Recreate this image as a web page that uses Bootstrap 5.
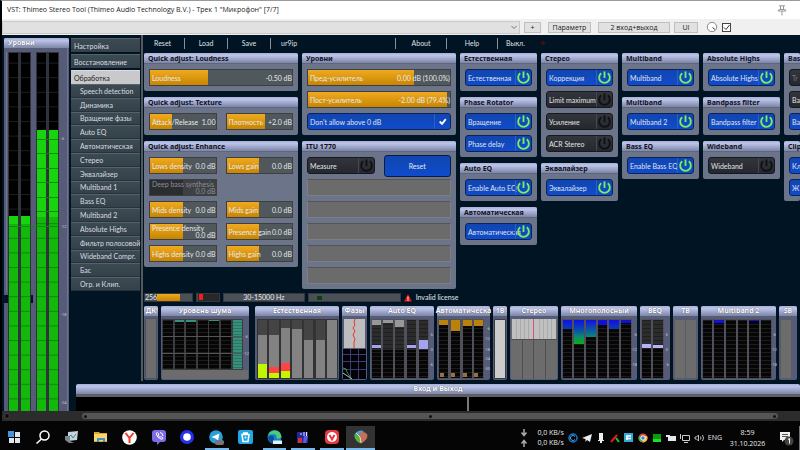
<!DOCTYPE html>
<html lang="ru">
<head>
<meta charset="utf-8">
<meta name="viewport" content="width=device-width, initial-scale=1">
<title>VST: Thimeo Stereo Tool</title>
<link href="https://cdn.jsdelivr.net/npm/bootstrap@5.3.0/dist/css/bootstrap.min.css" rel="stylesheet">
<style>
:root{--ui:Lato,Roboto,sans-serif;--sys:"Open Sans","Noto Sans",sans-serif;--hd:linear-gradient(#a9b1d2,#bcc3ea 25%,#8d95b8 80%,#7d86a5)}
body{background:#001424;color:#e6e9ee;font-family:var(--ui);font-size:7px;line-height:10px;min-height:100vh;overflow:hidden}
button,input,select{font:inherit;color:inherit;padding:0;margin:0;border:0;border-radius:0}
.titlebar{background:#fff;border-top:1px solid #9a9a9a;border-left:2px solid #000;color:#222;font-family:var(--sys);font-size:7px;height:19px;padding:0 13px 0 5px}
.hostbar{background:#f0f0f0;height:16px;font-family:var(--sys);font-size:7px;color:#222;border-left:2px solid #000;padding:0 69px 0 0;gap:4px}
.hostbar button{background:#e1e1e1;border:1px solid #bfbfbf;height:11px;line-height:9px;flex:none}
.preset{appearance:none;height:13px;border:1px solid #c8c8c8;background:#e1e1e1 url("data:image/svg+xml,%3Csvg xmlns='http://www.w3.org/2000/svg' width='6' height='5'%3E%3Cpath d='M.5 1 3 3.500 5.500 1' fill='none' stroke='%23777'/%3E%3C/svg%3E") no-repeat right 2px center}
.w-plus{width:17px}.w-par{width:43px}.w-io{width:72px;margin:0 0 0 3px}.w-ui{width:24px}
.agree{appearance:none;width:9px;height:9px;border:1px solid #444;background:#fff url("data:image/svg+xml,%3Csvg xmlns='http://www.w3.org/2000/svg' width='7' height='7'%3E%3Cpath d='M1 3.500 3 5.500 6.500 1' fill='none' stroke='%23333'/%3E%3C/svg%3E") no-repeat center}
.hostbar .w-par{margin-left:3px}
.plugin{border-left:2px solid #000}
.levels{width:65px;margin:3px 0 0 2px;background:#565c77}
.rest{min-width:0}
.hd{background:var(--hd);height:10px;line-height:10px;font-family:"Noto Sans",sans-serif;font-weight:700;color:#fff;text-shadow:0 0 1px #334;border-radius:2px 2px 0 0;white-space:nowrap;font-size:7px}
.hd-d{color:#10131c;text-shadow:none;padding-left:4px;height:11px;line-height:11px;border-bottom:1px solid #5d6580}
.side{width:69px;margin:3px 1px 0 2px;gap:2px}
.side a,.sub a{display:flex;align-items:center;background:linear-gradient(#3c4a52,#34414a);color:#d8dde2;text-decoration:none;border-top:1px solid #55626a;white-space:nowrap}
.side>a{height:14px;padding-left:3px}
.side>a.cur{background:#c9c9cb;color:#222;border-color:#ddd}
.sub{min-height:207px;margin-top:-2px}
.sub a{flex:1;padding-left:9px;border-bottom:1px solid #27333c}
.main{border-left:2px solid #55585c;padding-left:1px;min-width:0;margin-bottom:3px}
.menu{height:18px;padding-bottom:2px;display:grid;grid-template-columns:41fr 43fr 43fr 125fr 51fr 51fr 43fr 259fr;align-items:center}
.menu a{color:#dfe3e8;text-decoration:none;text-align:center;border-right:1px solid #8a9098;line-height:11px}
.menu a.first{text-align:left;padding-left:10px}.menu a.last{border:0;text-align:left;padding-left:8px}
.led{width:4px;height:4px;border-radius:50%;background:#4a0c10}
.cols{display:grid;gap:4px;grid-template-columns:repeat(2,minmax(0,154fr)) repeat(4,minmax(0,77fr)) minmax(0,16fr)}
.cols>div{display:flex;flex-direction:column;gap:6px;overflow:hidden}
.box{background:#6c748a;border-radius:2px}
.bd{padding:5px;display:grid;gap:5px 9px}
.two{grid-template-columns:1fr 1fr}
.full{grid-column:1/-1}
.sl{display:grid;height:17px}
.sl>*{grid-area:1/1;min-width:0}
.sl input{appearance:none;width:100%;height:17px;border:1px solid #3c4044;background:linear-gradient(90deg,transparent var(--v),#50585c var(--v)),linear-gradient(#efaa20,#c98500)}
.sl input::-webkit-slider-thumb{appearance:none;width:1px;height:1px}
.sl label{pointer-events:none;position:relative;padding:0 1px 0 3px;display:flex;justify-content:space-between;align-items:center;white-space:nowrap}
.sl .wrap2{flex-direction:column;align-items:stretch;justify-content:center;line-height:7px}
.wrap2 span:last-child{text-align:right}
.sl.dim{color:#8c9094}.sl.dim input{background:linear-gradient(90deg,#2b2d30 50%,#3d4144 50%)}
.tg{display:flex;align-items:center;height:17px;border:1px solid #15181e;border-radius:3px;background:linear-gradient(#32353c,#25282e);text-align:left;color:#e2e4e8;width:100%;min-width:0}
.tg span{flex:1;min-width:0;padding-left:2px;white-space:nowrap}
.tg svg{flex:none;width:16px;height:15px;border-left:1px solid #454850;color:#101113}
.tg.on{background:linear-gradient(#1145b0,#0f4ccc);border-color:#0b2358}
.tg.on svg{color:#79ee5e;border-color:#2f5fc0}
.reset{height:22px;margin:-2px 0 -3px;background:linear-gradient(#1145b0,#0f4ccc);border:1px solid #0a1c44;border-radius:3px}
.slot{height:17px;background:#6b6b6b;border:1px solid #7b7f88;border-top-color:#555}
.wide77{min-width:67px}
.status{display:grid;grid-template-columns:49fr 24fr 82fr 93fr 397fr;gap:3px;height:9px;margin:4px 0 4px;line-height:9px}
.status>div{white-space:nowrap}
.cell{background:#4a5056;border:1px solid #33383e;line-height:7px}
.orange{width:23px;background:linear-gradient(#efaa20,#c98500)}
.strip{display:grid;gap:3px;padding-right:3px;grid-template-columns:14fr 88fr 87fr 25fr 64fr 53fr 14fr 48fr 76fr 30fr 25fr 75fr 18fr}
.strip>div{background:#565c77;border-radius:2px;min-width:0}
.strip>.nat{margin-left:3px}
.strip svg{display:block;width:100%;height:64px;overflow:visible}
.strip .hd{display:flex;justify-content:center}
svg text{font-size:4px;fill:#c4c8d4;font-family:Roboto,sans-serif}
.strip svg text{text-anchor:end}
.io{margin-left:7px}
.scope{border-top:3px solid #5c5f64;height:17px;background:#000}
.scope i{width:2px;background:#777;margin-left:54%}
.hscroll{background:#2c2c2c;height:10px;border-left:2px solid #000;padding-left:2px}
.hscroll .thumb{background:#555;height:6px;border-radius:3px;margin:0 22px 0 72px;flex:1;padding:0 2px}
.knobdot{width:6px;height:6px;border-radius:50%;background:#0c0c0c;border:1px solid #444}
.dotk{width:3px;height:3px;border-radius:50%;background:#111}
.taskbar{background:#050505;padding-top:5px;height:29px;font-family:var(--sys);font-size:7px;color:#e8e8e8}
.apps{width:375px}
.apps button{flex:1;background:none;border-bottom:2px solid transparent;display:flex;align-items:center;justify-content:center}
.apps .run{position:relative}
.apps .run::after{content:"";position:absolute;left:3px;right:2px;bottom:-2px;height:2px;background:#76b9ed}
.apps .act{background:#333}.apps .act::after{left:0;right:0}
.tray{gap:4px}
.tray svg{width:10px;height:10px}
.tray svg.arrows{width:8px;height:20px;margin-right:5px}
.tray svg.note{width:16px;height:15px;margin-left:6px}
.clock{width:43px;text-align:center;line-height:11px}
</style>
<script src="https://cdn.jsdelivr.net/npm/bootstrap@5.3.0/dist/js/bootstrap.bundle.min.js"></script>
</head>
<body class="d-flex flex-column">
<svg width="0" height="0" class="position-absolute" aria-hidden="true">
<defs>
<symbol id="pw" viewBox="0 0 16 15"><path d="M4.500 3A5.700 5.700 0 1 0 11.500 3" fill="none" stroke="currentColor" stroke-width="2"/><path d="M8 1v7" stroke="currentColor" stroke-width="2"/></symbol>
<pattern id="seg" width="10" height="4" patternUnits="userSpaceOnUse"><rect width="10" height="4" fill="#060606"/><rect width="10" height="1" fill="#1c1c1c"/></pattern>
<pattern id="segd" width="10" height="4" patternUnits="userSpaceOnUse"><rect width="10" height="4" fill="#2c2c2c"/><rect width="10" height="1" fill="#1f1f1f"/></pattern>
<pattern id="lvb" width="70" height="14.600" patternUnits="userSpaceOnUse"><rect width="70" height="14.600" fill="#000"/><rect width="70" height="1" fill="#1d1d1d"/></pattern>
<pattern id="lvg" width="70" height="14.600" patternUnits="userSpaceOnUse"><rect width="70" height="14.600" fill="#12b80a"/><rect width="70" height="1" fill="#0c8a0a"/></pattern>
<pattern id="teal" width="10" height="3" patternUnits="userSpaceOnUse"><rect width="10" height="3" fill="#35917c"/><rect width="10" height="1" fill="#2b7463"/></pattern>
<linearGradient id="bg1" x2="0" y2="1"><stop stop-color="#1010e0"/><stop offset=".4" stop-color="#0a4cb0"/><stop offset=".7" stop-color="#0a8a70"/><stop offset="1" stop-color="#0cb010"/></linearGradient>
<linearGradient id="bg2" x2="0" y2="1"><stop stop-color="#1010e0"/><stop offset="1" stop-color="#0a8a78"/></linearGradient>
<linearGradient id="bg3" x2="0" y2="1"><stop stop-color="#1010e8"/><stop offset="1" stop-color="#0c3cb0"/></linearGradient>
</defs></svg>

<header class="titlebar d-flex align-items-center justify-content-between">
<span>VST: Thimeo Stereo Tool (Thimeo Audio Technology B.V.) - Трек 1 "Микрофон" [7/7]</span>
<svg width="10" height="11" viewBox="0 0 10 11" fill="none" stroke="#999"><path d="M2 .8h6M3.500 1v4M6.500 1v4M1 6q0-1.500 2-1.500h4q2 0 2 1.500zM5 6v4.500"/></svg>
</header>
<div class="hostbar d-flex align-items-center">
<select class="preset flex-fill" aria-label="Preset"><option></option></select>
<button class="w-plus">+</button><button class="w-par">Параметр</button><button class="w-io">2 вход+выход</button><button class="w-ui">UI</button>
<svg class="ms-1" width="12" height="12" viewBox="0 0 12 12" fill="#fff" stroke="#888"><circle cx="6" cy="6" r="4.700"/><path d="M6.500 6.500 9 8.500" stroke="#333"/></svg>
<input class="agree" type="checkbox" checked aria-label="Enabled">
</div>

<div class="plugin d-flex flex-fill">
<section class="levels flex-shrink-0">
<div class="hd ps-1">Уровни</div>
<svg class="d-block w-100" height="363" viewBox="0 0 65 363">
<path fill="#001424" d="M0 247h4v8H0zM27 247h2v8h-2z"/><path d="M2.500 4v240M63.500 0v363" stroke="#6d748e"/>
<path fill="#30333c" d="M4 4h23v359H4zM32 4h23v359H32z"/>
<path fill="url(#lvb)" d="M5 5h9v358H5zM17 5h9v358h-9zM33 5h9v358h-9zM45 5h9v358h-9z"/>
<path fill="url(#lvg)" d="M5 168h9v195H5zM17 168h9v195h-9zM33 82h9v281h-9zM45 82h9v281h-9z"/>
<path fill="#17d40c" d="M33 82h9v87h-9zM45 82h9v87h-9zM5 168h9v8H5zM17 168h9v8h-9z"/>
<path d="M33 91.500h21M33 105.500h21M33 120.500h21M33 134.500h21M33 149.500h21M33 163.500h21M5 178.500h49" stroke="#0c8a0a"/>
<text x="57" y="92">-6</text><text x="57" y="180">-12</text><text x="57" y="268">-18</text><text x="57" y="356">-24</text>
</svg>
</section>
<div class="rest d-flex flex-column flex-fill">
<div class="d-flex flex-fill">
<nav class="side d-flex flex-column flex-shrink-0">
<a href="#">Настройка</a><a href="#">Восстановление</a><a href="#" class="cur">Обработка</a>
<div class="sub d-flex flex-column"><a href="#">Speech detection</a><a href="#">Динамика</a><a href="#">Вращение фазы</a><a href="#">Auto EQ</a><a href="#">Автоматическая</a><a href="#">Стерео</a><a href="#">Эквалайзер</a><a href="#">Multiband 1</a><a href="#">Bass EQ</a><a href="#">Multiband 2</a><a href="#">Absolute Highs</a><a href="#">Фильтр полосовой</a><a href="#">Wideband Compr.</a><a href="#">Бас</a><a href="#">Огр. и Клип.</a></div>
</nav>
<main class="main flex-fill">
<nav class="menu"><a href="#" class="first">Reset</a><a href="#">Load</a><a href="#">Save</a><a href="#" class="first">ur9ip</a><a href="#">About</a><a href="#">Help</a><a href="#" class="last">Выкл.</a><span class="led"></span></nav>
<div class="cols">
<div>
 <section class="box"><div class="hd hd-d">Quick adjust: Loudness</div><div class="bd">
  <div class="sl"><input id="s1" type="range" style="--v:41%"><label for="s1"><span>Loudness</span><span>-0.50 dB</span></label></div></div></section>
 <section class="box"><div class="hd hd-d">Quick adjust: Texture</div><div class="bd two">
  <div class="sl"><input id="s2" type="range" style="--v:33%"><label for="s2"><span>Attack/Release</span><span>1.00</span></label></div>
  <div class="sl"><input id="s3" type="range" style="--v:58%"><label for="s3"><span>Плотность</span><span>+2.0 dB</span></label></div></div></section>
 <section class="box"><div class="hd hd-d">Quick adjust: Enhance</div><div class="bd two">
  <div class="sl"><input id="s4" type="range" style="--v:50%"><label for="s4"><span>Lows density</span><span>0.0 dB</span></label></div>
  <div class="sl"><input id="s5" type="range" style="--v:50%"><label for="s5"><span>Lows gain</span><span>0.0 dB</span></label></div>
  <div class="sl dim"><input id="s6" type="range" disabled><label for="s6" class="wrap2"><span>Deep bass synthesis</span><span>0.0 dB</span></label></div><div></div>
  <div class="sl"><input id="s7" type="range" style="--v:50%"><label for="s7"><span>Mids density</span><span>0.0 dB</span></label></div>
  <div class="sl"><input id="s8" type="range" style="--v:50%"><label for="s8"><span>Mids gain</span><span>0.0 dB</span></label></div>
  <div class="sl"><input id="s9" type="range" style="--v:50%"><label for="s9" class="wrap2"><span>Presence density</span><span>0.0 dB</span></label></div>
  <div class="sl"><input id="s10" type="range" style="--v:50%"><label for="s10"><span>Presence gain</span><span>0.0 dB</span></label></div>
  <div class="sl"><input id="s11" type="range" style="--v:50%"><label for="s11"><span>Highs density</span><span>0.0 dB</span></label></div>
  <div class="sl"><input id="s12" type="range" style="--v:50%"><label for="s12"><span>Highs gain</span><span>0.0 dB</span></label></div></div></section>
</div>
<div>
 <section class="box"><div class="hd hd-d">Уровни</div><div class="bd">
  <div class="sl"><input id="s13" type="range" style="--v:75%"><label for="s13"><span>Пред-усилитель</span><span>0.00 dB (100.0%)</span></label></div>
  <div class="sl"><input id="s14" type="range" style="--v:98%"><label for="s14"><span>Пост-усилитель</span><span>-2.00 dB (79.4%)</span></label></div>
  <button class="tg on"><span>Don't allow above 0 dB</span><svg viewBox="0 0 16 15"><path d="M5 7.500 7.500 10 11.500 5" fill="none" stroke="#fff" stroke-width="2"/></svg></button></div></section>
 <section class="box"><div class="hd hd-d">ITU 1770</div><div class="bd two">
  <button class="tg"><span>Measure</span><svg><use href="#pw"/></svg></button><button class="reset">Reset</button>
  <div class="slot full"></div><div class="slot full"></div><div class="slot full"></div><div class="slot full"></div><div class="slot full"></div></div></section>
</div>
<div>
 <section class="box"><div class="hd hd-d">Естественная</div><div class="bd"><button class="tg on"><span>Естественная</span><svg><use href="#pw"/></svg></button></div></section>
 <section class="box"><div class="hd hd-d">Phase Rotator</div><div class="bd"><button class="tg on"><span>Вращение</span><svg><use href="#pw"/></svg></button><button class="tg on"><span>Phase delay</span><svg><use href="#pw"/></svg></button></div></section>
 <section class="box"><div class="hd hd-d">Auto EQ</div><div class="bd"><button class="tg on"><span>Enable Auto EQ</span><svg><use href="#pw"/></svg></button></div></section>
 <section class="box"><div class="hd hd-d">Автоматическая</div><div class="bd"><button class="tg on"><span>Автоматическая</span><svg><use href="#pw"/></svg></button></div></section>
</div>
<div>
 <section class="box"><div class="hd hd-d">Стерео</div><div class="bd"><button class="tg on"><span>Коррекция</span><svg><use href="#pw"/></svg></button><button class="tg"><span>Limit maximum</span><svg><use href="#pw"/></svg></button><button class="tg"><span>Усиление</span><svg><use href="#pw"/></svg></button><button class="tg"><span>ACR Stereo</span><svg><use href="#pw"/></svg></button></div></section>
 <section class="box"><div class="hd hd-d">Эквалайзер</div><div class="bd"><button class="tg on"><span>Эквалайзер</span><svg><use href="#pw"/></svg></button></div></section>
</div>
<div>
 <section class="box"><div class="hd hd-d">Multiband</div><div class="bd"><button class="tg on"><span>Multiband</span><svg><use href="#pw"/></svg></button></div></section>
 <section class="box"><div class="hd hd-d">Multiband</div><div class="bd"><button class="tg on"><span>Multiband 2</span><svg><use href="#pw"/></svg></button></div></section>
 <section class="box"><div class="hd hd-d">Bass EQ</div><div class="bd"><button class="tg on"><span>Enable Bass EQ</span><svg><use href="#pw"/></svg></button></div></section>
</div>
<div>
 <section class="box"><div class="hd hd-d">Absolute Highs</div><div class="bd"><button class="tg on"><span>Absolute Highs</span><svg><use href="#pw"/></svg></button></div></section>
 <section class="box"><div class="hd hd-d">Bandpass filter</div><div class="bd"><button class="tg on"><span>Bandpass filter</span><svg><use href="#pw"/></svg></button></div></section>
 <section class="box"><div class="hd hd-d">Wideband</div><div class="bd"><button class="tg"><span>Wideband</span><svg><use href="#pw"/></svg></button></div></section>
</div>
<div>
 <section class="box"><div class="hd hd-d">Bas</div><div class="bd"><button class="tg wide77"><span class="text-secondary">Tr</span></button><button class="tg wide77"><span>Ba</span></button><button class="tg on wide77"><span>Ba</span></button></div></section>
 <section class="box"><div class="hd hd-d">Clip</div><div class="bd"><button class="tg on wide77"><span>Кл</span></button><button class="tg on wide77"><span>Ж</span></button></div></section>
</div>
</div>
<div class="status">
<div class="cell d-flex"><span>256</span><div class="orange"></div></div>
<div class="cell d-flex"><svg width="22" height="7"><path d="M1 0h21v7H1z" fill="#282828"/><path d="M2 0h4v6H2z" fill="#f02020"/></svg></div>
<div class="cell text-center">30-15000 Hz</div>
<div class="cell"><svg class="d-block" width="22" height="7"><path d="M8 2h5v4H8z" fill="#0c4010"/></svg></div>
<div class="d-flex align-items-center"><svg width="8" height="8" viewBox="0 0 8 8"><path d="M4 0 8 7.500H0z" fill="#e01818"/><path d="M4 2.500v3M4 6v1" stroke="#fff"/></svg><span class="ps-1">Invalid license</span></div>
</div>
<div class="strip">
<div><div class="hd">ДК</div><svg viewBox="0 0 14 64"><path fill="#6c6c6c" stroke="#4c5060" d="M1.500 2.500h11v60h-11z"/></svg></div>
<div><div class="hd">Уровень шума</div><svg viewBox="0 0 88 64"><path fill="#3c3c3c" d="M1 3h81v51H1z"/><path fill="url(#seg)" d="M2 4h10v49H2zM14 4h9v49h-9zM25 4h10v49H25zM37 4h10v49H37zM48 4h10v49H48zM60 4h10v49H60z"/><path fill="#35917c" d="M14 4h9v2h-9zM25 4h10v2H25zM48 4h10v1H48z"/><path fill="url(#teal)" d="M72 4h9v49h-9z"/><path stroke="#555" d="M1 20.500h81M1 37.500h81"/><path fill="#6c6c6c" d="M1 54h86v9H1z"/><text x="87" y="22">-6</text><text x="88" y="39">-12</text></svg></div>
<div class="nat"><div class="hd">Естественная</div><svg viewBox="0 0 84 64"><path fill="#333" d="M2 3h81v60H2z"/><path fill="#444" d="M3 4h9v58H3zM14 4h10v58H14zM26 4h9v58h-9z"/><path fill="#444" d="M37 4h10v58H37zM49 4h9v58h-9zM61 4h9v58h-9z"/><path fill="#828282" d="M3 19h9v43H3zM14 19h10v43H14zM26 12h9v50h-9zM37 13h10v49H37zM49 24h9v38h-9zM61 24h9v38h-9zM72 4h10v58H72z"/><path fill="#ff4343" d="M14 51h10v6H14zM26 47h9v8h-9z"/><path fill="#c2f500" d="M3 48h9v14H3zM14 57h10v5H14zM26 55h9v7h-9z"/></svg></div>
<div><div class="hd">Фазы</div><svg viewBox="0 0 25 64"><path fill="#bdbdbd" d="M2 3h21v29H2z"/><path fill="none" stroke="#f03030" d="m13 3-1 3 1 3-2 3 2 3-2 4 2 4-1 3v6"/><path fill="#020208" d="M1 33h23v30H1z"/><path stroke="#3c3c70" d="M1 38.500h23M1 45.500h23M1 53.500h23M8.500 33v30M16.500 33v30" fill="none"/><path fill="none" stroke="#3f8f4a" d="M1 52q4 0 4 4l4 6"/><path fill="none" stroke="#bbb" d="m1 57 9 6"/></svg></div>
<div><div class="hd">Auto EQ</div><svg viewBox="0 0 64 64"><path fill="#50505a" d="M1 3h58v60H1z"/><path fill="url(#seg)" d="M2 4h9v58H2zM13 4h10v58H13zM25 4h9v58h-9zM37 4h9v58h-9zM49 4h9v58h-9z"/><path fill="url(#segd)" d="M2 4h9v30H2zM13 4h10v30H13zM25 4h9v30h-9zM37 4h9v30h-9zM49 4h9v30h-9z"/><path fill="#989898" d="M2 4h9v5H2zM13 4h10v3H13zM25 4h9v7h-9z"/><path fill="#a3a3f0" d="M2 29h9v3H2zM37 29h9v3h-9zM49 24h9v9h-9z"/><text x="63" y="20">6</text><text x="63" y="35">0</text><text x="63" y="50">-6</text></svg></div>
<div><div class="hd">Автоматическа</div><svg viewBox="0 0 53 64"><path fill="#50505a" d="M1 3h46v60H1z"/><path fill="url(#seg)" d="M2 4h9v58H2zM14 4h9v58h-9zM26 4h9v58h-9zM37 4h9v58h-9z"/><path fill="#b8820c" d="M2 4h9v5H2zM14 4h9v11h-9zM26 4h9v6h-9zM37 4h9v6h-9z"/><path fill="#997044" d="M3 57h4v4H3zM14 57h4v4h-4zM26 57h4v4h-4zM37 57h4v4h-4z"/><text x="53" y="14">-6</text><text x="53" y="24">-12</text><text x="53" y="35">-18</text><text x="53" y="44">-24</text><text x="53" y="54">-30</text></svg></div>
<div><div class="hd">1B</div><svg viewBox="0 0 14 64"><path fill="#cbcbcb" stroke="#3c3c40" d="M1.500 3.500h11v59h-11z"/></svg></div>
<div><div class="hd">Стерео</div><svg viewBox="0 0 48 64"><path fill="#6c6c6c" d="M1 3h46v60H1z"/><path fill="#c0c0c0" d="M2 3h44v20H2z"/><path stroke="#aaa" d="M6.500 3v20M10.500 3v20M14.500 3v20M18.500 3v20M29.500 3v20M33.500 3v20M37.500 3v20M41.500 3v20"/><path stroke="#505050" d="M12.500 24v39M23.500 24v39M35.500 24v39M1 23.500h46"/><path stroke="#d85080" d="M23.500 3v20"/></svg></div>
<div><div class="hd">Многополосный</div><svg viewBox="0 0 76 64"><path fill="#50505a" d="M1 3h70v60H1z"/><path fill="url(#seg)" d="M2 4h9v58H2zM13 4h10v58H13zM25 4h10v58H25zM37 4h9v58h-9zM48 4h10v58H48zM60 4h10v58H60z"/><path fill="url(#bg3)" d="M2 4h9v9H2z"/><path fill="url(#bg1)" d="M13 4h10v24H13z"/><path fill="url(#bg2)" d="M25 4h10v17H25z"/><path fill="#1010d8" d="M37 4h9v5h-9zM60 4h10v3H60z"/><path fill="url(#bg3)" d="M48 4h10v9H48z"/><text x="76" y="20">-6</text><text x="76" y="35">-12</text><text x="76" y="50">-18</text></svg></div>
<div><div class="hd">BEQ</div><svg viewBox="0 0 30 64"><path fill="#50505a" d="M1 3h23v60H1z"/><path fill="url(#seg)" d="M2 4h9v58H2zM13 4h10v58H13z"/><path fill="url(#segd)" d="M2 4h9v29H2zM13 4h10v29H13z"/><path fill="#b4b4f4" d="M2 28h9v4H2zM13 29h10v3H13z"/><text x="28" y="20">6</text><text x="28" y="35">0</text><text x="29" y="50">-6</text></svg></div>
<div><div class="hd">TB</div><svg viewBox="0 0 25 64"><path fill="#6c6c6c" stroke="#5a5c64" d="M1.500 3.500h11v59h-11zM12.500 3.500h11v59h-11z"/></svg></div>
<div><div class="hd">Multiband 2</div><svg viewBox="0 0 75 64"><path fill="#50505a" d="M1 3h70v60H1z"/><path fill="url(#seg)" d="M2 4h9v58H2zM13 4h10v58H13zM25 4h10v58H25zM37 4h9v58h-9zM48 4h10v58H48zM60 4h10v58H60z"/><path fill="#1010d8" d="M13 4h10v3H13zM48 4h10v1H48z"/><text x="75" y="20">-6</text><text x="76" y="35">-12</text><text x="76" y="50">-18</text></svg></div>
<div><div class="hd">SB</div><svg viewBox="0 0 18 64"><path fill="#6c6c6c" stroke="#5a5c64" d="M1.500 3.500h11v59h-11z"/></svg></div>
</div>
</main>
</div>
<section class="io"><div class="hd text-center">Вход и Выход</div><div class="scope d-flex"><i></i></div></section>
</div>
</div>
<div class="hscroll d-flex align-items-center"><span class="knobdot"></span><div class="thumb d-flex align-items-center justify-content-between"><span class="dotk"></span><span class="dotk"></span><span class="dotk"></span></div></div>

<footer class="taskbar d-flex justify-content-between">
<div class="apps d-flex">
<button aria-label="Start"><svg width="13" height="13"><path fill="#3f97e0" d="M0 0h6v6H0z"/><path fill="#dfe6ec" d="M7 1h5v5H7zM1 7h5v5H1zM7 7h5v5H7z"/></svg></button>
<button aria-label="Search"><svg width="14" height="14" fill="none" stroke="#fff" stroke-width="1.500"><circle cx="8.500" cy="5.500" r="4.500"/><path d="m5.500 9-5 4.500"/></svg></button>
<button aria-label="Monitor"><svg width="14" height="12"><path fill="#c9d2d6" d="m3 1 10-1-1 9-9 1z"/><path fill="#7c878c" d="M0 5h5v5l4 2H4L0 9z"/><path d="m4 6 2-2 2 3 3-4" fill="none" stroke="#3b86b8"/></svg></button>
<button aria-label="Explorer"><svg width="14" height="12"><path fill="#e0a52c" d="M0 1h5l1 1h7v9H0z"/><path fill="#fbd56b" d="M0 3h13v7H0z"/><path fill="#3d8fd0" d="M3 7h8v4H9V9H5v2H3z"/></svg></button>
<button aria-label="Yandex"><svg width="15" height="15"><circle cx="7.500" cy="7.500" r="7.300" fill="#fff"/><path d="m3.500 3 4 5 4-5M7.500 8v5" fill="none" stroke="#f33a28" stroke-width="2"/></svg></button>
<button aria-label="Viber"><svg width="14" height="15"><path fill="#7d6ce8" d="M3 0h8q3 0 3 3v6q0 3-3 3H8l-3 3v-3H3q-3 0-3-3V3q0-3 3-3z"/><path d="M4 3.500q1 4.500 6 6l1-1.500-2-1.500-1 .8Q6 6 6 5l1-.8L5.500 2.500zM8 2.500q3 .5 3 3.500" fill="none" stroke="#fff"/></svg></button>
<button aria-label="Signal"><svg width="14" height="14"><circle cx="7" cy="7" r="7" fill="#2430ee"/><circle cx="7" cy="7" r="3.800" fill="#fff"/></svg></button>
<button class="run" aria-label="Telegram"><svg width="15" height="15"><circle cx="7" cy="7" r="6.800" fill="#2b9fd8"/><path fill="#fff" d="m2.500 7 8-3.500-1.500 7-2.500-2z"/><rect x="6" y="10" width="9" height="5" rx="2" fill="#777"/></svg></button>
<button aria-label="Recycle"><svg width="15" height="14"><rect width="15" height="14" rx="2" fill="#1fa6e4"/><path d="M4 4.500h7l-1 7H5zM5 3h5" fill="none" stroke="#fff" stroke-width="1.500"/><circle cx="7.500" cy="7.500" r="1" fill="#fff"/></svg></button>
<button class="run" aria-label="Edge"><svg width="15" height="15"><circle cx="7.500" cy="7" r="7" fill="#1680d0"/><path fill="#4ccf70" d="M5 1q8-2 9.500 6-3 3-5 1 1-4-4-4Q2 4 1 6 2 2 5 1z"/><path fill="#0c4f9a" d="M1 7q4-3 6 0-1 4 4 6-8 3-10-6z"/><path fill="#dff3ff" d="M6 10.500h9V14H6z"/></svg></button>
<button class="run" aria-label="Editor"><svg width="13" height="13"><path fill="#26289a" d="M1 1h11v11H1z"/><path fill="#cf3030" d="M2 7h4v5H2z"/><path fill="#5760d8" d="M8 5h4l-2 7H7z"/><path stroke="#e6e6ff" d="M4 3h2M8 1v4M10.500 1v4"/></svg></button>
<button class="run" aria-label="Vivaldi"><svg width="14" height="14"><rect width="14" height="14" rx="4" fill="#e83a3c"/><circle cx="7" cy="7" r="5" fill="#fff"/><path d="m4.500 5 2.500 4.500L9.500 5" fill="none" stroke="#e83a3c" stroke-width="2"/></svg></button>
<button class="run act" aria-label="Reaper"><svg width="14" height="14"><path fill="#4c9de0" d="M1 4q3-5 9-3L6 5z"/><path fill="#57b040" d="M.5 4q-1 6 6 9.500L7 5z"/><path fill="#c4705c" d="M5 4q4-4 8 0 2 5-6 9.500z"/><path d="m2 3 4 4 1 6" fill="none" stroke="#e8e0d0"/></svg></button>
</div>
<div class="tray d-flex align-items-center">
<svg class="arrows" viewBox="0 0 8 20"><path d="M4 1v6M4 19v-6M1.500 4.500 4 7.500l2.500-3M1.500 15.500 4 12.500l2.500 3" fill="none" stroke="#aaa" stroke-width="1.500"/></svg>
<div class="text-nowrap">0,0 KB/s<br>0,0 KB/s</div>
<svg viewBox="0 0 10 10"><circle cx="5" cy="5" r="4" fill="none" stroke="#1878c8" stroke-width="1.500"/><path d="M7 3.500a2.500 2.500 0 1 0 0 3" fill="none" stroke="#4aa8e8"/></svg>
<svg viewBox="0 0 10 10"><path fill="#eee" d="m0 5 10-4-2 8-3-2-1.500 2v-3z"/></svg>
<svg viewBox="0 0 10 10"><path fill="#eee" d="M3 0h4v7H3zM2 7h6v1H2zM4 8h2v2H4z"/></svg>
<svg viewBox="0 0 10 10"><path d="m1 9 6-7" stroke="#e01818" stroke-width="2"/><path d="m6 5 3 4" stroke="#18c818" stroke-width="2"/></svg>
<svg viewBox="0 0 10 10"><path fill="#35a8d8" d="M0 0h9v9H0z"/><path d="M2 3h5M2 5.500h5M3 3v4" stroke="#fff" stroke-width="1.500"/></svg>
<svg viewBox="0 0 10 10"><circle cx="5" cy="5" r="4.500" fill="#e04838"/><path fill="#46b050" d="M1 3a4.500 4.500 0 0 0 4 6.500V5z"/><path fill="#f0c030" d="M5 9.500A4.500 4.500 0 0 0 9 3H5z"/><circle cx="5" cy="5" r="2.200" fill="#3878e0" stroke="#fff"/></svg>
<svg viewBox="0 0 10 10"><path fill="#0a9a10" d="M1 1h8v5H1z"/><path fill="#1be020" d="M1 6h8v3H1z"/></svg>
<svg viewBox="0 0 10 10"><path fill="#e8e8e8" d="M2 3h8v5H2zM0 2h4v2H0z"/></svg>
<svg viewBox="0 0 10 10" fill="none" stroke="#ccc"><path d="M2.500 2.500h7v5h-7zM4 9.500h4M.5 1v5"/></svg>
<svg viewBox="0 0 10 10" fill="none" stroke="#bbb"><path d="M1 4h1.500l2-2v6l-2-2H1zM6.500 3.500q1 1.500 0 3M8.500 2q2 3 0 6"/></svg>
<span>ENG</span>
<div class="clock">8:59<br>31.10.2026</div>
<svg viewBox="0 0 16 15" class="note"><path fill="#f0f0f0" d="M1 1h10v8H5l-2 2V9H1z"/><path d="M3 3.500h6M3 5.500h6" stroke="#555"/><circle cx="10" cy="10" r="4.500" fill="#444"/><path d="M9 8.500 10.500 7.500v5" fill="none" stroke="#fff"/></svg>
<span class="border-start border-secondary h-100"></span>
</div>
</footer>
</body>
</html>
